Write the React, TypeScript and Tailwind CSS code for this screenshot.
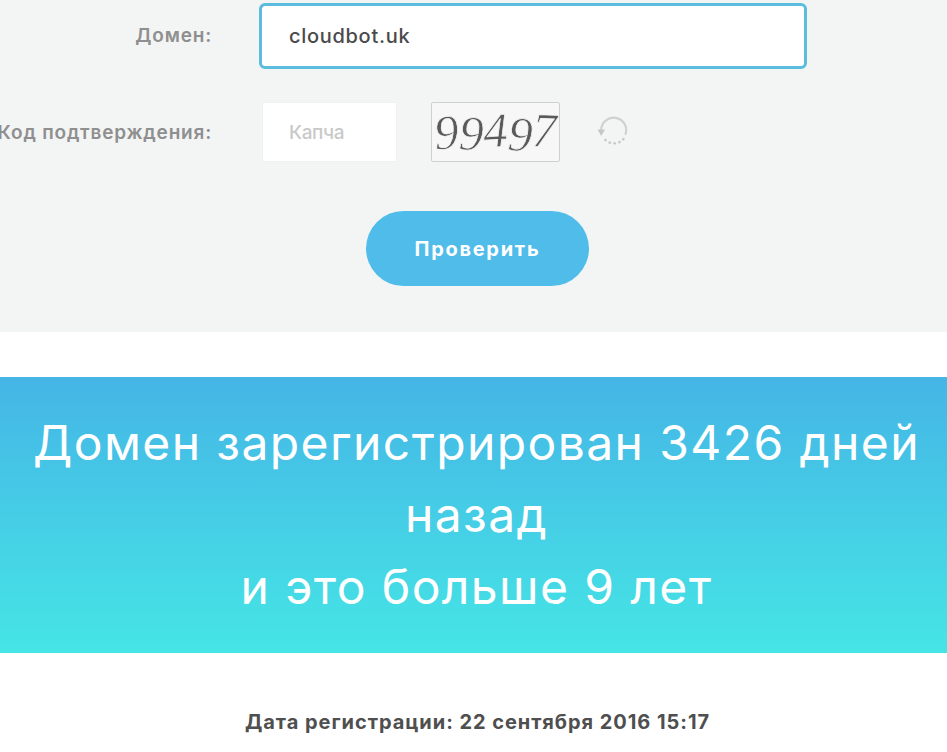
const font = "font-['Inter','Liberation_Sans',sans-serif]";

function RefreshIcon() {
  return (
    <svg width="34" height="34" viewBox="0 0 34 34" fill="none" className="ml-[37px]">
      <path d="M4.2 15A12.5 12.5 0 1 1 28.6 19" stroke="#cfd2d2" strokeWidth="2.2" strokeLinecap="round" />
      <path d="M26.5 24A12.5 12.5 0 0 1 7.5 24" stroke="#c4c8c8" strokeWidth="2.4" strokeLinecap="round" strokeDasharray="0.5 4.4" />
      <path d="M0.5 14.5H8L4.2 21Z" fill="#c4c8c8" />
    </svg>
  );
}

const digits = [
  { d: "9", c: "-rotate-[4deg]" },
  { d: "9", c: "rotate-[3deg] translate-y-[1px]" },
  { d: "4", c: "-rotate-[3deg] -translate-y-[2px]" },
  { d: "9", c: "rotate-[4deg] translate-y-[2px]" },
  { d: "7", c: "rotate-[2deg] -translate-y-[2px]" },
];

function Captcha() {
  return (
    <div className="ml-[34px] flex h-[60px] w-[129px] items-center justify-center rounded-[2px] border border-[#cfd1d1] bg-[#f7f7f7]">
      {digits.map((x, i) => (
        <span
          key={i}
          className={`inline-block font-['Liberation_Serif',serif] text-[49px] leading-none italic text-[#5a5a5a] [-webkit-text-stroke:0.7px_#f7f7f7] ${x.c}`}
        >
          {x.d}
        </span>
      ))}
    </div>
  );
}

export default function App() {
  return (
    <div className={`${font} h-[752px] w-[947px] overflow-hidden bg-white`}>
      <section className="h-[332px] bg-[#f3f5f5] pt-[3px]">
        <div className="flex h-[66px] items-center">
          <label className="flex w-[212px] shrink-0 justify-end whitespace-nowrap text-[19px] font-semibold tracking-[0.8px] text-[#8f8f8f]">
            Домен:
          </label>
          <div className="ml-[47px] flex h-[66px] w-[548px] items-center rounded-[6px] border-[3px] border-[#5bbcdd] bg-white pb-[1px] pl-[27px] text-[20px] font-medium tracking-[0.7px] text-[#4a4a4a]">
            cloudbot.uk
          </div>
        </div>
        <div className="mt-[33px] flex h-[60px] items-center">
          <label className="flex w-[212px] shrink-0 justify-end whitespace-nowrap pt-[2px] text-[19px] font-semibold tracking-[0.8px] text-[#8f8f8f]">
            Код подтверждения:
          </label>
          <div className="ml-[50px] flex h-[60px] w-[135px] items-center rounded-[2px] border border-[#f0f1f1] bg-white pt-[2px] pl-[26px] text-[19px] font-medium tracking-[-0.4px] text-[#c9c9c9]">
            Капча
          </div>
          <Captcha />
          <RefreshIcon />
        </div>
        <div className="mt-[49px] flex justify-center">
          <button className="ml-[8px] h-[75px] w-[223px] rounded-full bg-[#50bce9] text-[20px] font-bold tracking-[1.7px] text-white">
            Проверить
          </button>
        </div>
      </section>
      <section className="mt-[45px] flex h-[276px] flex-col items-center justify-center bg-gradient-to-b from-[#45b5e6] to-[#45e5e5] pl-[6px] text-center text-[48px] leading-[72px] font-normal tracking-[1.4px] text-white">
        <p>Домен зарегистрирован 3426 дней</p>
        <p>назад</p>
        <p>и это больше 9 лет</p>
      </section>
      <p className="mt-[56px] pl-[8px] text-center text-[20px] font-bold leading-[26px] tracking-[0.95px] text-[#4f4f4f]">
        Дата регистрации: 22 сентября 2016 15:17
      </p>
    </div>
  );
}
